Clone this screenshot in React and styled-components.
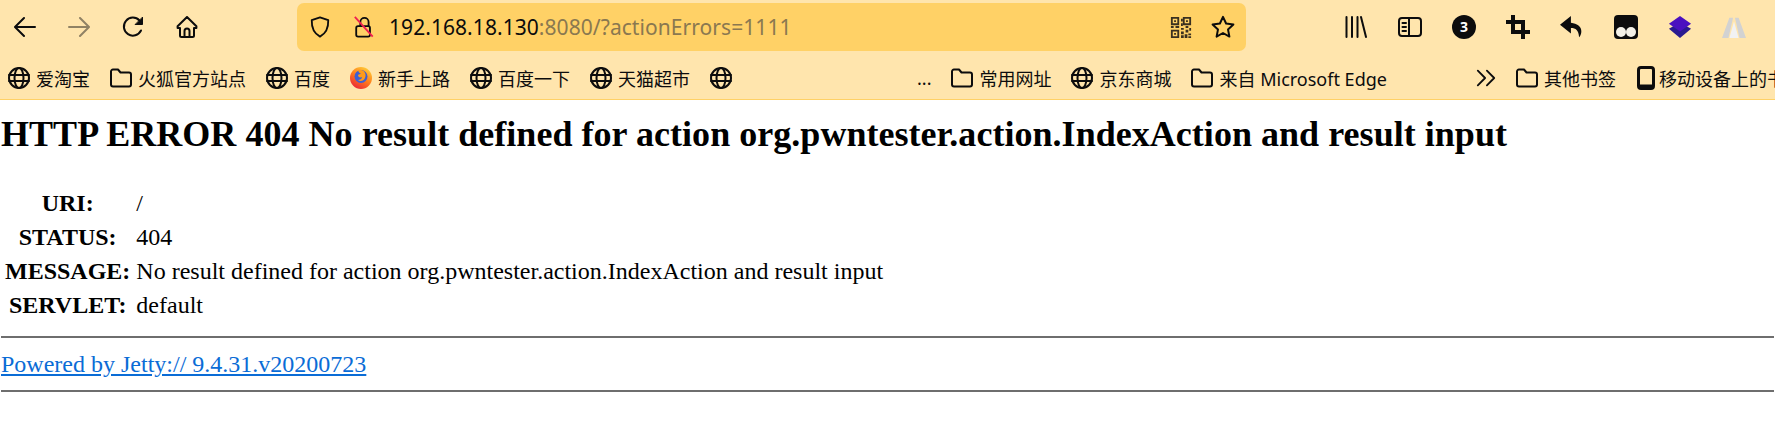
import React from "react";
import styled, { createGlobalStyle } from "styled-components";

const GlobalStyle = createGlobalStyle`
  html, body { margin: 0; padding: 0; background: #fff; overflow: hidden; }
`;

const Chrome = styled.header`
  background: #ffe5ad;
  border-bottom: 1px solid #ffd166;
  height: 100px;
  box-sizing: border-box;
  overflow: hidden;
`;

const Toolbar = styled.div`
  display: flex;
  align-items: center;
  height: 48px;
  margin-top: 3px;
  padding-left: 14px;
`;

const NavButtons = styled.div`
  display: flex;
  align-items: center;
  gap: 32px;
  width: 185px;
  flex: none;
`;

const IconSlot = styled.span`
  display: inline-flex;
  width: ${(p) => p.$size || 22}px;
  height: ${(p) => p.$height || p.$size || 22}px;
  flex: none;
  align-items: center;
  justify-content: center;
  color: #0c0c0d;
  opacity: ${(p) => p.$faded ? 0.45 : 1};
  svg { display: block; width: 100%; height: 100%; }
`;

const UrlBar = styled.div`
  display: flex;
  align-items: center;
  width: 949px;
  height: 48px;
  margin-left: 98px;
  padding: 0 11px 0 12px;
  box-sizing: border-box;
  background: #ffd166;
  border-radius: 7px;
  flex: none;
`;

const UrlIcons = styled.div`
  display: flex;
  gap: 22px;
  flex: none;
`;

const UrlText = styled.div`
  flex: 1;
  margin-left: 14px;
  font: 21px "Noto Sans", sans-serif;
  letter-spacing: 0.06px;
  white-space: nowrap;
  color: #0c0c0d;
`;

const UrlRest = styled.span`
  color: #8a7850;
`;

const UrlActions = styled.div`
  display: flex;
  align-items: center;
  gap: 19px;
`;

const ExtIcons = styled.div`
  display: flex;
  align-items: center;
  gap: 30px;
  margin-left: 98px;
  flex: none;
`;

const Bookmarks = styled.nav`
  display: flex;
  align-items: center;
  height: 42px;
  margin-top: 6px;
  padding-left: 8px;
  white-space: nowrap;
`;

const Bookmark = styled.span`
  display: inline-flex;
  align-items: center;
  gap: ${(p) => p.$gap ?? 6}px;
  flex: none;
  margin-right: 20px;
  margin-left: ${(p) => p.$push || 0}px;
  font: 18px "Noto Sans", "Noto Sans CJK SC", sans-serif;
  color: #0c0c0d;
`;

const Ellipsis = styled.span`
  flex: none;
  margin-left: 165px;
  margin-right: 20px;
  font: 18px "Noto Sans", sans-serif;
  color: #0c0c0d;
`;

const Page = styled.main`
  padding: 0 1px;
  font-family: "Liberation Serif", "Times New Roman", serif;
  color: #000;
`;

const Title = styled.h1`
  margin: 0;
  padding-top: 13px;
  font-size: 36px;
  line-height: 42px;
  font-weight: bold;
  letter-spacing: 0.035px;
  white-space: nowrap;
`;

const InfoTable = styled.table`
  margin: 30px 0 0 1px;
  border-spacing: 2px;
  font-size: 24px;
  line-height: 32px;
  th { font-weight: bold; padding: 0 3px 0 1px; text-align: center; }
  td { padding: 0 0 0 1px; }
  th, td { height: 32px; }
`;

const Rule = styled.hr`
  margin: ${(p) => p.$top}px 0 0;
  border: 0;
  border-top: 2px solid #6e6e6e;
  height: 0;
`;

const PoweredLink = styled.a`
  display: block;
  margin-top: 13px;
  width: fit-content;
  font-size: 24px;
  line-height: 27px;
  color: #0a6cd6;
  text-decoration: underline;
`;

const stroke = { fill: "none", stroke: "currentColor", strokeWidth: 2, strokeLinecap: "round", strokeLinejoin: "round" };

const Back = () => <svg viewBox="0 0 22 22" {...stroke}><path d="M21 11H1.5M10 2l-9 9 9 9" /></svg>;
const Forward = () => <svg viewBox="0 0 22 22" {...stroke}><path d="M1 11h19.5M12 2l9 9-9 9" /></svg>;
const Reload = () => (
  <svg viewBox="0 0 22 22" {...stroke}>
    <path d="M19 14.5A9 9 0 1 1 17.5 4.5" />
    <path d="M20.5 1.5v7h-7z" fill="currentColor" strokeWidth="1" />
  </svg>
);
const Home = () => (
  <svg viewBox="0 0 22 22" {...stroke}>
    <path d="M11 1 1.6 10.2v1.8H4v7.5A1.5 1.5 0 0 0 5.5 21h11a1.5 1.5 0 0 0 1.5-1.5V12h2.4v-1.8z" />
    <path d="M8.5 21v-6a2.5 2.5 0 0 1 5 0v6" />
  </svg>
);
const Shield = () => <svg viewBox="0 0 22 24" {...stroke}><path d="M11 1.5 20 4.5c.3 8.500-2.500 14.500-9 18-6.500-3.500-9.300-9.500-9-18z" /></svg>;
const Lock = () => (
  <svg viewBox="0 0 22 24">
    <g {...stroke}>
      <path d="M7 11V6.500a4.500 4.500 0 0 1 9 0V11" />
      <rect x="2.500" y="11" width="15" height="11.500" rx="2" />
    </g>
    <path d="M1 1 20.500 22.500" stroke="#f02050" strokeWidth="2" />
  </svg>
);
const Qr = () => (
  <svg viewBox="0 0 22 24" fill="#3a3020">
    <path fillRule="evenodd" d="M0 1h9v9H0zM2 3v5h5V3zM13 1h9v9h-9zM15 3v5h5V3zM0 15h9v9H0zM2 17v5h5v-5z" />
    <path d="M3.500 4.500h2v2h-2zM16.500 4.500h2v2h-2zM3.500 18.500h2v2h-2zM11 3h2v3h-2zM11 8h2v3h-2zM0 11h3v2H0zM5 11h4v2H5zM11 13h3v2h-3zM16 11h3v2h-3zM20 13h2v3h-2zM16 15h3v3h-3zM11 17h3v3h-3zM15 20h3v4h-3zM19 19h3v2h-3zM11 21h3v3h-3zM19 22h3v2h-3z" />
  </svg>
);
const Star = () => <svg viewBox="0 0 24 24" {...stroke}><path d="m12 1.800 3.100 6.700 7.300.9-5.400 5 1.400 7.200-6.400-3.600-6.400 3.600 1.400-7.200-5.400-5 7.300-.9z" /></svg>;
const Library = () => <svg viewBox="0 0 22 24" {...stroke}><path d="M1.500 2v20M7 2v20M12.500 2v20M16 2l5 20" /></svg>;
const Sidebar = () => (
  <svg viewBox="0 0 24 22" {...stroke}>
    <rect x="1" y="2" width="22" height="18" rx="3" />
    <path d="M11 2v18M4.500 7H8M4.500 11H8M4.500 15H8" />
  </svg>
);
const Badge = () => (
  <svg viewBox="0 0 24 24">
    <circle cx="12" cy="12" r="12" fill="#0c0c0d" />
    <text x="12" y="17" textAnchor="middle" fill="#fff" fontFamily="Noto Sans" fontWeight="700" fontSize="14">3</text>
  </svg>
);
const Crop = () => <svg viewBox="0 0 24 24" fill="none" stroke="#0c0c0d" strokeWidth="4"><path d="M7 0v17h17M0 7h17v17" /></svg>;
const Undo = () => <svg viewBox="0 0 22 22"><path d="M10 1 0 9l10 8v-5c4.500 0 7 2 7.500 8.500 3-3 4.500-12-7.500-13.500z" fill="#0c0c0d" /></svg>;
const Ghost = () => (
  <svg viewBox="0 0 24 24">
    <rect width="24" height="24" rx="4" fill="#0c0c0d" />
    <circle cx="7" cy="17" r="5" fill="#f4f1e8" />
    <circle cx="17" cy="17" r="5" fill="#f4f1e8" />
  </svg>
);
const Layers = () => (
  <svg viewBox="0 0 26 26">
    <path d="M13 8 25 15 13 25 1 15z" fill="#2a1a90" />
    <path d="M13 1 25 9.500 13 18 1 9.500z" fill="#4a10c0" />
  </svg>
);
const Peaks = () => (
  <svg viewBox="0 0 26 24">
    <path d="M8 2h4l-5 22H0z" fill="#d2d2d2" />
    <path d="M14 2h4l8 22h-7z" fill="#d2d2d2" />
    <path d="M13 6l5 18H8z" fill="#f2f2f2" />
  </svg>
);
const Globe = () => (
  <svg viewBox="0 0 22 22" {...stroke}>
    <circle cx="11" cy="11" r="10" />
    <ellipse cx="11" cy="11" rx="4.500" ry="10" />
    <path d="M1 8h20M1 14h20" />
  </svg>
);
const Folder = () => <svg viewBox="0 0 22 22" {...stroke}><path d="M1 4.500A2 2 0 0 1 3 2.500h5l2.500 3H19A2 2 0 0 1 21 7.500v10a2 2 0 0 1-2 2H3a2 2 0 0 1-2-2z" /></svg>;
const Firefox = () => (
  <svg viewBox="0 0 22 22">
    <defs>
      <linearGradient id="fx" x1="0.800" y1="0" x2="0.200" y2="1">
        <stop offset="0" stopColor="#ffd23a" />
        <stop offset="0.500" stopColor="#ff7a1a" />
        <stop offset="1" stopColor="#e8203c" />
      </linearGradient>
    </defs>
    <circle cx="11" cy="11" r="11" fill="url(#fx)" />
    <circle cx="11" cy="9.500" r="6.500" fill="#3f5fd0" />
    <path d="M8 3c6-1 9 4 7 8-1 3-5 4-7 2 2 0 4-1 4-3-2 1-4 0-4-2 1-1 2-1 3-1-1-1-3-2-3-4z" fill="#ff9a1a" />
  </svg>
);
const Chevrons = () => <svg viewBox="0 0 22 22" {...stroke}><path d="m2 3 8 8-8 8M12 3l8 8-8 8" /></svg>;
const Mobile = () => (
  <svg viewBox="0 0 20 24">
    <rect x="2.500" y="1.500" width="15" height="21" rx="2.500" fill="none" stroke="#0c0c0d" strokeWidth="3" />
    <rect x="2.500" y="18.500" width="15" height="4" fill="#0c0c0d" />
  </svg>
);

const bookmarks = [
  { icon: <Globe />, label: "爱淘宝" },
  { icon: <Folder />, label: "火狐官方站点" },
  { icon: <Globe />, label: "百度" },
  { icon: <Firefox />, label: "新手上路" },
  { icon: <Globe />, label: "百度一下" },
  { icon: <Globe />, label: "天猫超市" },
  { icon: <Globe />, label: "" },
];

const otherBookmarks = [
  { icon: <Folder />, label: "常用网址" },
  { icon: <Globe />, label: "京东商城" },
  { icon: <Folder />, label: "来自 Microsoft Edge" },
];

const rows = [
  ["URI:", "/"],
  ["STATUS:", "404"],
  ["MESSAGE:", "No result defined for action org.pwntester.action.IndexAction and result input"],
  ["SERVLET:", "default"],
];

const App = () => (
  <>
    <GlobalStyle />
    <Chrome>
      <Toolbar>
        <NavButtons>
          <IconSlot><Back /></IconSlot>
          <IconSlot $faded><Forward /></IconSlot>
          <IconSlot><Reload /></IconSlot>
          <IconSlot><Home /></IconSlot>
        </NavButtons>
        <UrlBar>
          <UrlIcons>
            <IconSlot><Shield /></IconSlot>
            <IconSlot><Lock /></IconSlot>
          </UrlIcons>
          <UrlText>192.168.18.130<UrlRest>:8080/?actionErrors=1111</UrlRest></UrlText>
          <UrlActions>
            <IconSlot><Qr /></IconSlot>
            <IconSlot $size={24}><Star /></IconSlot>
          </UrlActions>
        </UrlBar>
        <ExtIcons>
          <IconSlot $size={24}><Library /></IconSlot>
          <IconSlot $size={24}><Sidebar /></IconSlot>
          <IconSlot $size={24}><Badge /></IconSlot>
          <IconSlot $size={24}><Crop /></IconSlot>
          <IconSlot $size={24}><Undo /></IconSlot>
          <IconSlot $size={24}><Ghost /></IconSlot>
          <IconSlot $size={24}><Layers /></IconSlot>
          <IconSlot $size={24}><Peaks /></IconSlot>
        </ExtIcons>
      </Toolbar>
      <Bookmarks>
        {bookmarks.map((b, i) => (
          <Bookmark key={i}><IconSlot>{b.icon}</IconSlot>{b.label}</Bookmark>
        ))}
        <Ellipsis>...</Ellipsis>
        {otherBookmarks.map((b) => (
          <Bookmark key={b.label}><IconSlot>{b.icon}</IconSlot>{b.label}</Bookmark>
        ))}
        <Bookmark $push={69}><IconSlot $size={20}><Chevrons /></IconSlot></Bookmark>
        <Bookmark><IconSlot><Folder /></IconSlot>其他书签</Bookmark>
        <Bookmark $gap={3}><IconSlot $size={20} $height={24}><Mobile /></IconSlot>移动设备上的书签</Bookmark>
      </Bookmarks>
    </Chrome>
    <Page>
      <Title>HTTP ERROR 404 No result defined for action org.pwntester.action.IndexAction and result input</Title>
      <InfoTable>
        <tbody>
          {rows.map(([k, v]) => (
            <tr key={k}><th>{k}</th><td>{v}</td></tr>
          ))}
        </tbody>
      </InfoTable>
      <Rule $top={13} />
      <PoweredLink href="#">Powered by Jetty:// 9.4.31.v20200723</PoweredLink>
      <Rule $top={12} />
    </Page>
  </>
);

export default App;
